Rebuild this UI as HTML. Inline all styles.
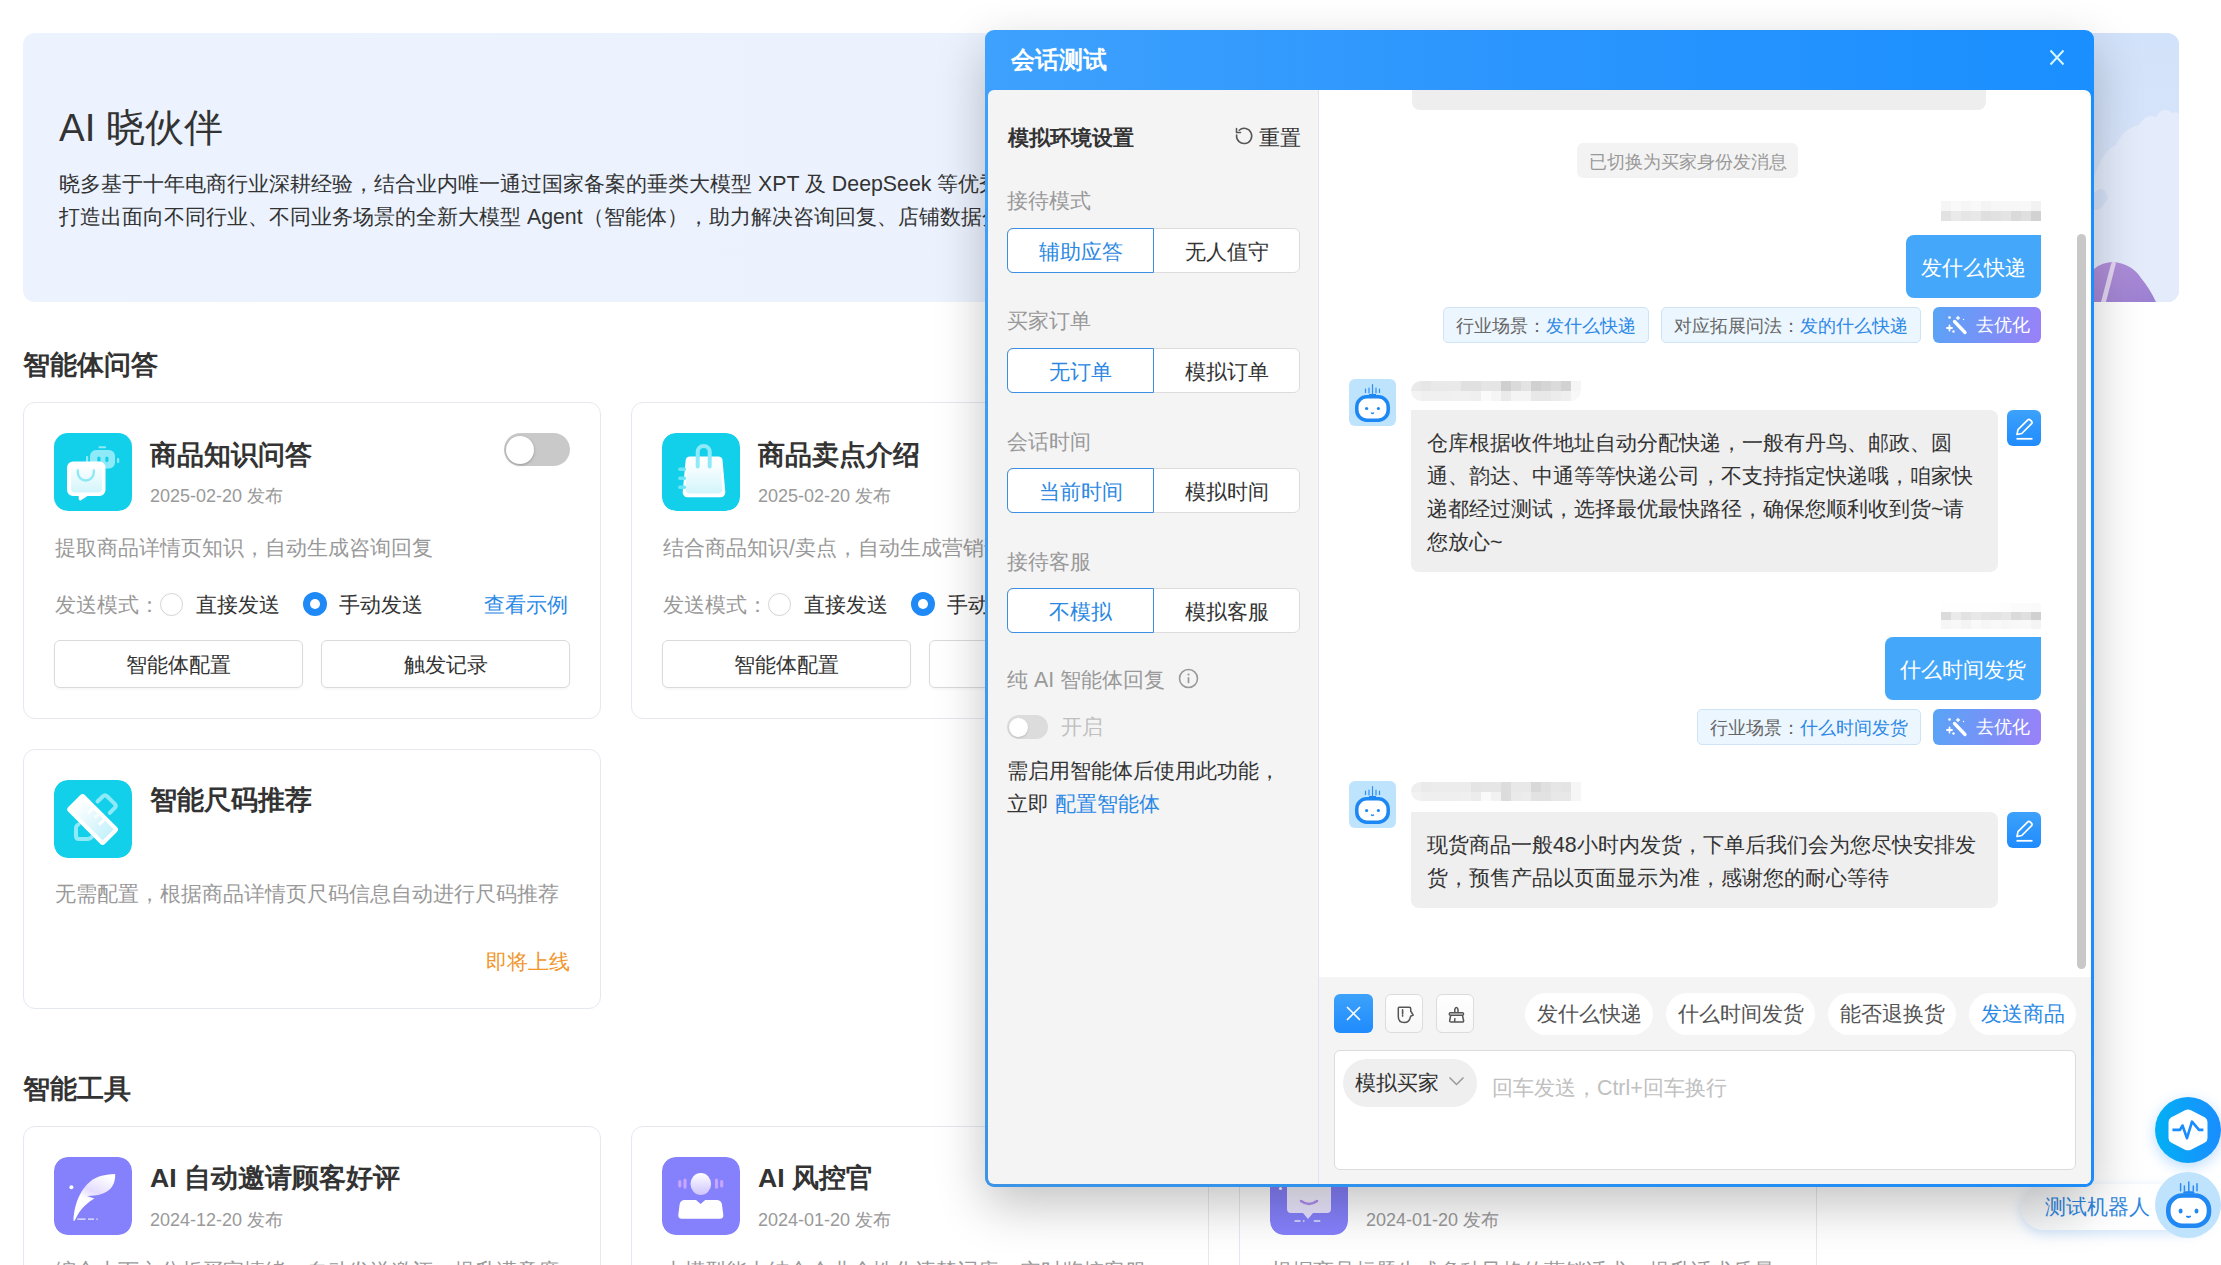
<!DOCTYPE html>
<html><head><meta charset="utf-8">
<style>
*{box-sizing:border-box;margin:0;padding:0}
html,body{width:2221px;height:1265px;overflow:hidden;background:#fff}
body{position:relative;font-family:"Liberation Sans",sans-serif;color:#333}
.abs{position:absolute}
.banner{left:23px;top:33px;width:2156px;height:269px;border-radius:12px;background:linear-gradient(90deg,#ecf3fe 0%,#ebf2fe 60%,#d6e5fb 100%);overflow:hidden}
.t{position:absolute;white-space:nowrap}
.card{position:absolute;border:1px solid #e6e8f1;border-radius:12px;background:#fff;width:578px}
.icon{position:absolute;left:30px;top:30px;width:78px;height:78px;border-radius:14px}
.cyan{background:#13d0ea}
.purple{background:#8580fb}
.ctitle{position:absolute;left:126px;font-size:26.667px;line-height:40px;font-weight:bold;color:#333;white-space:nowrap}
.cdate{position:absolute;left:126px;font-size:18px;line-height:30px;color:#999;white-space:nowrap}
.cdesc{position:absolute;left:30px;font-size:21.333px;line-height:33px;color:#999;white-space:nowrap}
.sec{position:absolute;left:23px;font-size:26.667px;line-height:40px;font-weight:bold;color:#333}

.radio{position:absolute;width:23px;height:23px;border-radius:50%;border:1px solid #d4d4d4;background:#fff}
.radio.on{width:24px;height:24px;border:none;background:#1f89f6}
.radio.on:after{content:"";position:absolute;left:7px;top:7px;width:10px;height:10px;border-radius:50%;background:#fff}
.rtxt{position:absolute;font-size:21.333px;line-height:33px;color:#333;white-space:nowrap}
.btn{position:absolute;top:237px;width:249px;height:48px;border:1px solid #dadada;border-radius:6px;background:#fff;box-shadow:0 2px 2px rgba(0,0,0,0.03);text-align:center;font-size:21.333px;line-height:44px;padding-top:2px;color:#333}
.tog{position:absolute;left:480px;top:30px;width:66px;height:33px;border-radius:17px;background:#c9c9c9}
.tog:after{content:"";position:absolute;left:2px;top:2.5px;width:28px;height:28px;border-radius:50%;background:#fff;box-shadow:0 1px 3px rgba(0,0,0,0.25)}

.modal{position:absolute;left:985px;top:30px;width:1109px;height:1157px;border-radius:9px;background:linear-gradient(180deg,rgba(0,0,0,0) 60px,rgba(0,0,0,0) 60px),linear-gradient(90deg,#3ea1fd 0%,#2a95fe 50%,#1a8fff 100%);box-shadow:0 18px 50px rgba(0,0,0,0.24);z-index:10}
.m{position:absolute;left:0;top:0;width:2221px;height:1265px;z-index:11}
.m .t{position:absolute;white-space:nowrap}
.lp{position:absolute;left:988px;top:90px;width:331px;height:1094px;background:#f4f4f5;border-radius:6px 0 0 6px;border-right:1px solid #dde5ee}
.chat{position:absolute;left:1319px;top:90px;width:772px;height:1094px;background:#fff;border-radius:0 7px 6px 0;overflow:hidden}
.lbl{position:absolute;left:1007px;font-size:21.333px;line-height:33px;color:#999;white-space:nowrap}
.seg{position:absolute;left:1007px;width:293px;height:45px;border:1px solid #dcdcdc;border-radius:6px;background:#fff}
.seg .a,.seg .b{position:absolute;top:-1px;height:45px;font-size:21.333px;line-height:45px;padding-top:2px;text-align:center}
.seg .a{left:-1px;width:147px;border:1px solid #3d8fe3;border-radius:6px 0 0 6px;color:#2b88e2;line-height:43px}
.seg .b{left:146px;width:146px;color:#333}
.bub{position:absolute;font-size:21.333px;line-height:33px;white-space:nowrap}
.ubub{background:#45a7fa;color:#fff;border-radius:8px 0 8px 8px;padding:17px 15px 13px;height:63px}
.gbub{background:#efefef;color:#333;border-radius:0 8px 8px 8px;padding:17px 14px 13px 16px;width:587px}
.tag{position:absolute;height:36px;border:1px solid #cfe3f7;background:#ecf6ff;border-radius:5px;font-size:18px;line-height:34px;padding:1px 0 0 12px;color:#666;white-space:nowrap}
.tag b{font-weight:normal;color:#2d88e6}
.opt{position:absolute;left:1933px;width:108px;height:36px;border-radius:6px;background:linear-gradient(105deg,#58a4f6 0%,#7d8ff7 60%,#9b80f8 100%);color:#fff;font-size:18px;line-height:36px;white-space:nowrap}
.av{position:absolute;left:1349px;width:47px;height:47px;border-radius:6px;background:#bee3fd}
.edit{position:absolute;left:2007px;width:34px;height:36px;border-radius:6px;background:linear-gradient(180deg,#3da2fb,#1f8bfd)}
.blur{position:absolute;height:20px}
.pill{position:absolute;top:993px;height:42px;border-radius:21px;background:#fff;font-size:21px;line-height:42px;color:#555;text-align:center;white-space:nowrap}
.tb{position:absolute;top:994px;width:38px;height:39px;border-radius:6px;border:1px solid #dcdcdc;background:linear-gradient(180deg,#fff,#f7f7f7)}
</style></head><body>

<!-- banner -->
<div class="abs banner"></div>
<div class="abs" style="left:2094px;top:33px;width:85px;height:269px;overflow:hidden;border-radius:0 12px 12px 0">
<svg width="85" height="269" viewBox="0 0 85 269"><defs><linearGradient id="bk" x1="0" y1="0" x2="0" y2="1"><stop offset="0" stop-color="#d2e2fa"/><stop offset="1" stop-color="#dde7fb"/></linearGradient>
<linearGradient id="pl" x1="0" y1="0" x2="1" y2="1"><stop offset="0" stop-color="#b592dc"/><stop offset="1" stop-color="#9a7fd0"/></linearGradient></defs>
<rect width="85" height="269" fill="url(#bk)"/>
<path d="M0 145 Q8 118 22 112 Q30 95 45 92 Q52 80 62 84 Q70 72 78 80 Q84 78 85 82 V269 H0z" fill="#e4ecfc"/>
<path d="M0 160 Q10 150 14 165 Q6 180 0 176z" fill="#d6e3fa"/>
<path d="M0 269 V236 Q8 229 20 229 Q38 231 47 245 Q56 256 62 269z" fill="url(#pl)"/>
<path d="M7 269 L17 231 Q19 227 22 230 L12 269z" fill="#eadff5" opacity="0.9"/>
</svg></div>
<div class="t" style="left:59px;top:103px;font-size:38.5px;line-height:50px;color:#333">AI 晓伙伴</div>
<div class="t" style="left:59px;top:168px;font-size:21.333px;line-height:33px;color:#333">晓多基于十年电商行业深耕经验，结合业内唯一通过国家备案的垂类大模型 XPT 及 DeepSeek 等优秀大模型，<br>打造出面向不同行业、不同业务场景的全新大模型 Agent（智能体），助力解决咨询回复、店铺数据分析等问题</div>

<div class="sec" style="top:345px">智能体问答</div>

<!-- card 1 -->
<div class="card" style="left:23px;top:402px;height:317px">
<svg class="icon" viewBox="0 0 78 78" style="border-radius:0"><defs><linearGradient id="gw" x1="0" y1="0" x2="0" y2="1"><stop offset="0" stop-color="#fff"/><stop offset="1" stop-color="#d2f5fb"/></linearGradient></defs>
<rect width="78" height="78" rx="14" fill="#13d0ea"/>
<rect x="36" y="17" width="25" height="18.5" rx="6" fill="#8eeaf8"/>
<rect x="44.5" y="13.2" width="7.6" height="2" rx="1" fill="#8eeaf8"/>
<rect x="32" y="23" width="2.2" height="6.5" rx="1" fill="#8eeaf8"/>
<rect x="63" y="25" width="2.2" height="5" rx="1" fill="#8eeaf8"/>
<rect x="43.3" y="23.6" width="3.2" height="5.6" rx="1.6" fill="#13d0ea"/>
<rect x="51.3" y="23.6" width="3.2" height="5.6" rx="1.6" fill="#13d0ea"/>
<path d="M19 28.5h26.5a6 6 0 0 1 6 6v22.5a6 6 0 0 1-6 6h-12l-6.5 4.2a1.5 1.5 0 0 1-2.3-1.2v-3h-5.7a6 6 0 0 1-6-6v-22.5a6 6 0 0 1 6-6z" fill="#fff"/>
<path d="M21 32.5h23a4 4 0 0 1 4 4v19a4 4 0 0 1-4 4h-23a4 4 0 0 1-4-4v-19a4 4 0 0 1 4-4z" fill="url(#gw)"/>
<path d="M23.8 37.5v2a8 8 0 0 0 16 0v-2" stroke="#8ee8f5" stroke-width="2.4" fill="none" stroke-linecap="round"/>
</svg>
  <div class="tog"></div>
  <div class="ctitle" style="top:32px">商品知识问答</div>
  <div class="cdate" style="top:78px">2025-02-20 发布</div>
  <div class="cdesc" style="top:129px;left:31px">提取商品详情页知识，自动生成咨询回复</div>
  <div class="rtxt" style="left:31px;top:186px;color:#999">发送模式：</div>
  <div class="radio" style="left:135.5px;top:189.5px"></div>
  <div class="rtxt" style="left:172px;top:186px">直接发送</div>
  <div class="radio on" style="left:279px;top:189px"></div>
  <div class="rtxt" style="left:315px;top:186px">手动发送</div>
  <div class="rtxt" style="left:460px;top:186px;color:#2b89e6">查看示例</div>
  <div class="btn" style="left:30px">智能体配置</div>
  <div class="btn" style="left:297px">触发记录</div>
</div>

<!-- card 2 -->
<div class="card" style="left:631px;top:402px;height:317px">
<svg class="icon" viewBox="0 0 78 78"><rect width="78" height="78" rx="14" fill="#13d0ea"/>
<path d="M28.2 23.6h27.8a4.6 4.6 0 0 1 4.6 4.2l2.7 31.3a4.8 4.8 0 0 1-4.8 5.2h-33a4.8 4.8 0 0 1-4.8-5.2l2.9-31.3a4.6 4.6 0 0 1 4.6-4.2z" fill="#fff"/>
<path d="M29.5 28h25a4 4 0 0 1 4 3.7l2 24.5a4 4 0 0 1-4 4.3h-29a4 4 0 0 1-4-4.3l2-24.5a4 4 0 0 1 4-3.7z" fill="url(#gw)"/>
<path d="M35.7 33.5V19a6 6 0 0 1 12 0v14.5" stroke="#8eeaf8" stroke-width="4" stroke-linecap="round" fill="none"/>
<path d="M17.8 36.2h4.6M17.8 45.2h4.6M17.8 54.2h4.6" stroke="#6ae4f6" stroke-width="3.5" stroke-linecap="round"/>
</svg>
  <div class="ctitle" style="top:32px">商品卖点介绍</div>
  <div class="cdate" style="top:78px">2025-02-20 发布</div>
  <div class="cdesc" style="top:129px;left:31px">结合商品知识/卖点，自动生成营销话术</div>
  <div class="rtxt" style="left:31px;top:186px;color:#999">发送模式：</div>
  <div class="radio" style="left:135.5px;top:189.5px"></div>
  <div class="rtxt" style="left:172px;top:186px">直接发送</div>
  <div class="radio on" style="left:279px;top:189px"></div>
  <div class="rtxt" style="left:315px;top:186px">手动发送</div>
  <div class="btn" style="left:30px">智能体配置</div>
  <div class="btn" style="left:297px">触发记录</div>
</div>

<!-- card 4 -->
<div class="card" style="left:23px;top:749px;height:260px">
<svg class="icon" viewBox="0 0 78 78"><rect width="78" height="78" rx="14" fill="#13d0ea"/>
<path d="M43.5 21.5l5.5-5.2q2-1.8 4 0l7.8 7.6q1.8 2 0 4l-5 5" stroke="#8eeaf8" stroke-width="4" fill="none" stroke-linecap="round" stroke-linejoin="round"/>
<path d="M24.5 44.5q-2.5 1-2.5 4v7.5q0 3 3 3h9q2.2 0 3.8-1.8" stroke="#8eeaf8" stroke-width="4" fill="none" stroke-linecap="round" stroke-linejoin="round"/>
<defs><linearGradient id="gr" x1="0" y1="0" x2="1" y2="0"><stop offset="0" stop-color="#fff"/><stop offset="1" stop-color="#c6f1fb"/></linearGradient></defs>
<g transform="rotate(45 38.6 39.4)"><rect x="12.6" y="27.6" width="52" height="23.6" rx="3.5" fill="#fff"/>
<rect x="16.6" y="31.6" width="44" height="15.6" rx="1.2" fill="url(#gr)"/>
<path d="M31 31.6v7M39 31.6v5M47 31.6v7" stroke="#fff" stroke-width="2.8"/></g>
</svg>
  <div class="ctitle" style="top:30px">智能尺码推荐</div>
  <div class="cdesc" style="top:128px;left:31px">无需配置，根据商品详情页尺码信息自动进行尺码推荐</div>
  <div class="rtxt" style="left:462px;top:196px;color:#f0962c">即将上线</div>
</div>

<div class="sec" style="top:1069px">智能工具</div>

<!-- tool cards -->
<div class="card" style="left:23px;top:1126px;height:300px">
  <svg class="icon" viewBox="0 0 78 78"><defs><linearGradient id="gp" x1="0.7" y1="0" x2="0.3" y2="1"><stop offset="0" stop-color="#fff"/><stop offset="0.4" stop-color="#e4dcff"/><stop offset="0.6" stop-color="#fff"/><stop offset="1" stop-color="#fff"/></linearGradient></defs>
<rect width="78" height="78" rx="14" fill="#8580fb"/>
<circle cx="17.4" cy="30.2" r="2" fill="#fff"/>
<path d="M19.5 63.5C20 48 27 26 45 19.5C50 17.8 56 17.2 61.2 17C61.5 26 58 33 49 36.5C46 37.8 43 38.4 40 38.6L33 39L40.5 41.5C34 45 26 52 21.5 62C21 63.8 19.5 64.5 19.5 63.5Z" fill="url(#gp)"/>
<path d="M23.3 62.2h8.3M34 62.2h6M42.3 62.2h1.4" stroke="#fff" stroke-width="1.3" opacity="0.85"/>
</svg>
  <div class="ctitle" style="top:31px">AI 自动邀请顾客好评</div>
  <div class="cdate" style="top:78px">2024-12-20 发布</div>
  <div class="cdesc" style="top:128px;left:31px">综合上下文分析买家情绪，自动发送邀评，提升满意度</div>
</div>
<div class="card" style="left:631px;top:1126px;height:300px">
  <svg class="icon" viewBox="0 0 78 78"><defs><linearGradient id="gh" x1="0" y1="0" x2="0" y2="1"><stop offset="0" stop-color="#fff"/><stop offset="1" stop-color="#cdc4ff"/></linearGradient></defs>
<rect width="78" height="78" rx="14" fill="#8580fb"/>
<ellipse cx="38.8" cy="27" rx="10.3" ry="11" fill="url(#gh)"/>
<path d="M22.5 43h11.5l4.6 4 4.6-4h11.5q4.5 0 5.3 4.5l1.3 10.5q0.3 3.8-3.5 3.8h-38q-3.8 0-3.5-3.8l1.3-10.5q0.8-4.5 5-4.5z" fill="#fff"/>
<path d="M17.8 24.5v4.5M23 23.2v7M54.5 23.2v7M59.7 24.5v4.5" stroke="#c6a6ff" stroke-width="3.2" stroke-linecap="round"/>
</svg>
  <div class="ctitle" style="top:31px">AI 风控官</div>
  <div class="cdate" style="top:78px">2024-01-20 发布</div>
  <div class="cdesc" style="top:128px;left:31px">大模型能力结合企业个性化违禁词库，实时监控客服</div>
</div>
<div class="card" style="left:1239px;top:1126px;height:300px">
  <svg class="icon" viewBox="0 0 78 78"><defs><linearGradient id="gc" x1="0" y1="0" x2="0" y2="1"><stop offset="0" stop-color="#fff"/><stop offset="1" stop-color="#e6e0ff"/></linearGradient></defs>
<rect width="78" height="78" rx="14" fill="#8580fb"/>
<circle cx="10.5" cy="31.5" r="1.6" fill="#fff"/>
<path d="M21 14h36a4 4 0 0 1 4 4v34a4 4 0 0 1-4 4h-14l-5 6-5-6h-12a4 4 0 0 1-4-4v-34a4 4 0 0 1 4-4z" fill="url(#gc)"/>
<path d="M31 44q8 6 16 0" stroke="#b08ef0" stroke-width="2.5" fill="none" stroke-linecap="round"/>
<path d="M24.5 64h6M33 64h1.5M43.8 64h6.5" stroke="#fff" stroke-width="1.3" opacity="0.8"/>
</svg>
  <div class="ctitle" style="top:31px;height:29px;overflow:hidden">AI 营销话术</div>
  <div class="cdate" style="top:78px">2024-01-20 发布</div>
  <div class="cdesc" style="top:128px;left:31px">根据商品标题生成多种风格的营销话术，提升话术质量</div>
</div>



<div style="position:absolute;left:2021px;top:1184px;width:190px;height:46px;border-radius:23px;background:linear-gradient(90deg,#f3f4f6,#fff 40%);box-shadow:0 4px 12px rgba(40,130,240,0.22);z-index:5"></div>
<div style="position:absolute;left:2045px;top:1191px;font-size:21.333px;line-height:33px;color:#2e86de;white-space:nowrap;z-index:6">测试机器人</div>
<div style="position:absolute;left:2155px;top:1097px;width:66px;height:66px;border-radius:50%;background:linear-gradient(90deg,#02b0f4,#1a8dff);box-shadow:0 4px 14px rgba(30,140,255,0.3);z-index:12">
<svg width="66" height="66" viewBox="0 0 66 66"><path d="M33 12.5 Q34.5 12.5 36 13.3 L50 20.5 Q52.5 22 52.5 25 V41 Q52.5 44 50 45.5 L36 52.7 Q33 54 30 52.7 L16 45.5 Q13.5 44 13.5 41 V25 Q13.5 22 16 20.5 L30 13.3 Q31.5 12.5 33 12.5z" fill="#fff"/>
<path d="M17.4 32.9H25L27.5 28.5L32 41.2L37 24.7L44 32.9H48.4" stroke="#1a8cff" stroke-width="2.6" fill="none" stroke-linejoin="round"/></svg></div>
<div style="position:absolute;left:2155px;top:1172px;width:66px;height:66px;border-radius:50%;background:#bfe3fd;z-index:12">
<svg width="66" height="66" viewBox="0 0 66 66"><path d="M33.8 10v10M25.6 11.7v7M42 11.7v7M29.4 14v4.5M38.3 14v4.5" stroke="#2b8cf3" stroke-width="1.5" stroke-linecap="round"/><path d="M29.5 20.5h8.6" stroke="#1f88f3" stroke-width="2.6" stroke-linecap="round"/>
<rect x="13.3" y="23.5" width="40.7" height="30.2" rx="14" fill="#fff" stroke="#1f88f3" stroke-width="4.6"/><ellipse cx="25.6" cy="39" rx="2" ry="2.5" fill="#1f88f3"/><ellipse cx="41.5" cy="39" rx="2" ry="2.5" fill="#1f88f3"/><path d="M32 44.5q1.5 1 3 0" stroke="#1f88f3" stroke-width="2" stroke-linecap="round"/></svg></div>
<div class="modal"></div>
<div class="m">
  <div style="position:absolute;left:985px;top:90px;width:1109px;height:1097px;border-radius:0 0 9px 9px;background:linear-gradient(90deg,#3d94e6,#2790f2 50%,#1e8cf8);-webkit-mask-image:linear-gradient(180deg,transparent 0%,#000 100%);mask-image:linear-gradient(180deg,transparent 0%,#000 100%)"></div>
  <div class="t" style="left:1011px;top:45px;font-size:24px;line-height:30px;font-weight:bold;color:#fff">会话测试</div>
  <svg style="position:absolute;left:2049px;top:49px" width="16" height="17" viewBox="0 0 16 17"><path d="M1.5 1.5l13 14M14.5 1.5l-13 14" stroke="#d6f6ff" stroke-width="2"/></svg>

  <div class="lp"></div>
  <div class="t" style="left:1008px;top:122px;font-size:21.333px;line-height:33px;font-weight:bold;color:#333">模拟环境设置</div>
  <svg style="position:absolute;left:1234px;top:126px" width="20" height="20" viewBox="0 0 20 20"><path d="M5.2 4.2A7.6 7.6 0 1 1 2.6 9" stroke="#555" stroke-width="1.5" fill="none" stroke-linecap="round"/><path d="M2.5 2.5v4h4" stroke="#555" stroke-width="1.5" fill="none" stroke-linecap="round" stroke-linejoin="round"/></svg>
  <div class="t" style="left:1259px;top:122px;font-size:21.333px;line-height:33px;color:#333">重置</div>

  <div class="lbl" style="top:185px">接待模式</div>
  <div class="seg" style="top:228px"><div class="a">辅助应答</div><div class="b">无人值守</div></div>
  <div class="lbl" style="top:305px">买家订单</div>
  <div class="seg" style="top:348px"><div class="a">无订单</div><div class="b">模拟订单</div></div>
  <div class="lbl" style="top:426px">会话时间</div>
  <div class="seg" style="top:468px"><div class="a">当前时间</div><div class="b">模拟时间</div></div>
  <div class="lbl" style="top:546px">接待客服</div>
  <div class="seg" style="top:588px"><div class="a">不模拟</div><div class="b">模拟客服</div></div>
  <div class="lbl" style="top:664px">纯 AI 智能体回复</div>
  <svg style="position:absolute;left:1178px;top:668px" width="21" height="21" viewBox="0 0 21 21"><circle cx="10.5" cy="10.5" r="9" stroke="#999" stroke-width="1.6" fill="none"/><circle cx="10.5" cy="6.5" r="1.1" fill="#999"/><path d="M10.5 9.2v6" stroke="#999" stroke-width="1.7"/></svg>
  <div style="position:absolute;left:1007px;top:715px;width:41px;height:24px;border-radius:12px;background:#dcdcdc"><div style="position:absolute;left:2px;top:2.5px;width:19px;height:19px;border-radius:50%;background:#fff;box-shadow:0 1px 2px rgba(0,0,0,0.15)"></div></div>
  <div class="t" style="left:1061px;top:711px;font-size:21.333px;line-height:33px;color:#c0c0c0">开启</div>
  <div class="t" style="left:1007px;top:755px;font-size:21.333px;line-height:33px;color:#333">需启用智能体后使用此功能，<br>立即 <span style="color:#2b89e6">配置智能体</span></div>

  <div class="chat"></div>
  <div style="position:absolute;left:1412px;top:90px;width:574px;height:20px;background:#eeeeee;border-radius:0 0 8px 8px"></div>
  <div style="position:absolute;left:1577px;top:143px;width:221px;height:35px;border-radius:6px;background:#f3f3f3;font-size:18px;line-height:35px;padding-top:2px;color:#999;text-align:center">已切换为买家身份发消息</div>

  <div class="blur" style="left:1941px;top:201px;width:100px;height:20px;overflow:hidden;"><i style="position:absolute;left:0px;top:0px;width:10px;height:10px;background:rgb(245,245,245)"></i><i style="position:absolute;left:10px;top:0px;width:10px;height:10px;background:rgb(249,249,249)"></i><i style="position:absolute;left:20px;top:0px;width:10px;height:10px;background:rgb(246,246,246)"></i><i style="position:absolute;left:30px;top:0px;width:10px;height:10px;background:rgb(249,249,249)"></i><i style="position:absolute;left:40px;top:0px;width:10px;height:10px;background:rgb(244,244,244)"></i><i style="position:absolute;left:50px;top:0px;width:10px;height:10px;background:rgb(247,247,247)"></i><i style="position:absolute;left:60px;top:0px;width:10px;height:10px;background:rgb(247,247,247)"></i><i style="position:absolute;left:70px;top:0px;width:10px;height:10px;background:rgb(247,247,247)"></i><i style="position:absolute;left:80px;top:0px;width:10px;height:10px;background:rgb(248,248,248)"></i><i style="position:absolute;left:90px;top:0px;width:10px;height:10px;background:rgb(242,242,242)"></i><i style="position:absolute;left:0px;top:10px;width:10px;height:10px;background:rgb(226,226,226)"></i><i style="position:absolute;left:10px;top:10px;width:10px;height:10px;background:rgb(234,234,234)"></i><i style="position:absolute;left:20px;top:10px;width:10px;height:10px;background:rgb(229,229,229)"></i><i style="position:absolute;left:30px;top:10px;width:10px;height:10px;background:rgb(232,232,232)"></i><i style="position:absolute;left:40px;top:10px;width:10px;height:10px;background:rgb(223,223,223)"></i><i style="position:absolute;left:50px;top:10px;width:10px;height:10px;background:rgb(225,225,225)"></i><i style="position:absolute;left:60px;top:10px;width:10px;height:10px;background:rgb(228,228,228)"></i><i style="position:absolute;left:70px;top:10px;width:10px;height:10px;background:rgb(218,218,218)"></i><i style="position:absolute;left:80px;top:10px;width:10px;height:10px;background:rgb(223,223,223)"></i><i style="position:absolute;left:90px;top:10px;width:10px;height:10px;background:rgb(210,210,210)"></i></div>
  <div class="bub ubub" style="left:1906px;top:235px">发什么快递</div>
  <div class="tag" style="left:1443px;top:307px;width:206px">行业场景：<b>发什么快递</b></div>
  <div class="tag" style="left:1661px;top:307px;width:260px">对应拓展问法：<b>发的什么快递</b></div>
  <div class="opt" style="top:307px"><svg width="22" height="20" viewBox="0 0 22 20" style="position:absolute;left:13px;top:8px"><path d="M8.5 6.5l10.5 11" stroke="#fff" stroke-width="3.3" stroke-linecap="round"/><path d="M3.5 10.5v5M1 13h5" stroke="#fff" stroke-width="1.8" stroke-linecap="round"/><circle cx="3.5" cy="2.5" r="1.3" fill="#fff"/><path d="M12 1.5v3M10.5 3h3" stroke="#fff" stroke-width="1.3" stroke-linecap="round"/><circle cx="7.5" cy="16.5" r="1.2" fill="#fff"/><circle cx="17.5" cy="4.5" r="0.7" fill="#fff"/></svg><span style="position:absolute;left:43px;top:0">去优化</span></div>

  <div class="av" style="top:379px"><svg width="47" height="47" viewBox="0 0 47 47"><path d="M23.5 5.5v10M20 9v5M27 9v5M16.5 10v3.5M30.5 10v3.5" stroke="#2f8ff5" stroke-width="1.2" stroke-linecap="round"/><path d="M20 16h7" stroke="#1d87f3" stroke-width="2"/><rect x="7.8" y="17.8" width="31.4" height="23.4" rx="10" fill="#fff" stroke="#1d87f3" stroke-width="3.5"/><circle cx="17.6" cy="29.5" r="1.6" fill="#1d87f3"/><circle cx="29.4" cy="29.5" r="1.6" fill="#1d87f3"/><path d="M22.5 34q1 0.8 2 0" stroke="#1d87f3" stroke-width="1.5" stroke-linecap="round"/></svg></div>
  <div class="blur" style="left:1411px;top:381px;width:170px;height:20px;overflow:hidden;border-radius:10px 0 10px 10px"><i style="position:absolute;left:0px;top:0px;width:10px;height:10px;background:rgb(233,233,233)"></i><i style="position:absolute;left:10px;top:0px;width:10px;height:10px;background:rgb(230,230,230)"></i><i style="position:absolute;left:20px;top:0px;width:10px;height:10px;background:rgb(233,233,233)"></i><i style="position:absolute;left:30px;top:0px;width:10px;height:10px;background:rgb(233,233,233)"></i><i style="position:absolute;left:40px;top:0px;width:10px;height:10px;background:rgb(233,233,233)"></i><i style="position:absolute;left:50px;top:0px;width:10px;height:10px;background:rgb(224,224,224)"></i><i style="position:absolute;left:60px;top:0px;width:10px;height:10px;background:rgb(224,224,224)"></i><i style="position:absolute;left:70px;top:0px;width:10px;height:10px;background:rgb(229,229,229)"></i><i style="position:absolute;left:80px;top:0px;width:10px;height:10px;background:rgb(229,229,229)"></i><i style="position:absolute;left:90px;top:0px;width:10px;height:10px;background:rgb(207,207,207)"></i><i style="position:absolute;left:100px;top:0px;width:10px;height:10px;background:rgb(218,218,218)"></i><i style="position:absolute;left:110px;top:0px;width:10px;height:10px;background:rgb(227,227,227)"></i><i style="position:absolute;left:120px;top:0px;width:10px;height:10px;background:rgb(208,208,208)"></i><i style="position:absolute;left:130px;top:0px;width:10px;height:10px;background:rgb(213,213,213)"></i><i style="position:absolute;left:140px;top:0px;width:10px;height:10px;background:rgb(219,219,219)"></i><i style="position:absolute;left:150px;top:0px;width:10px;height:10px;background:rgb(210,210,210)"></i><i style="position:absolute;left:160px;top:0px;width:10px;height:10px;background:rgb(245,245,245)"></i><i style="position:absolute;left:0px;top:10px;width:10px;height:10px;background:rgb(243,243,243)"></i><i style="position:absolute;left:10px;top:10px;width:10px;height:10px;background:rgb(240,240,240)"></i><i style="position:absolute;left:20px;top:10px;width:10px;height:10px;background:rgb(240,240,240)"></i><i style="position:absolute;left:30px;top:10px;width:10px;height:10px;background:rgb(240,240,240)"></i><i style="position:absolute;left:40px;top:10px;width:10px;height:10px;background:rgb(241,241,241)"></i><i style="position:absolute;left:50px;top:10px;width:10px;height:10px;background:rgb(241,241,241)"></i><i style="position:absolute;left:60px;top:10px;width:10px;height:10px;background:rgb(239,239,239)"></i><i style="position:absolute;left:70px;top:10px;width:10px;height:10px;background:rgb(250,250,250)"></i><i style="position:absolute;left:80px;top:10px;width:10px;height:10px;background:rgb(245,245,245)"></i><i style="position:absolute;left:90px;top:10px;width:10px;height:10px;background:rgb(234,234,234)"></i><i style="position:absolute;left:100px;top:10px;width:10px;height:10px;background:rgb(244,244,244)"></i><i style="position:absolute;left:110px;top:10px;width:10px;height:10px;background:rgb(244,244,244)"></i><i style="position:absolute;left:120px;top:10px;width:10px;height:10px;background:rgb(232,232,232)"></i><i style="position:absolute;left:130px;top:10px;width:10px;height:10px;background:rgb(232,232,232)"></i><i style="position:absolute;left:140px;top:10px;width:10px;height:10px;background:rgb(236,236,236)"></i><i style="position:absolute;left:150px;top:10px;width:10px;height:10px;background:rgb(239,239,239)"></i><i style="position:absolute;left:160px;top:10px;width:10px;height:10px;background:rgb(248,248,248)"></i></div>
  <div class="bub gbub" style="left:1411px;top:410px">仓库根据收件地址自动分配快递，一般有丹鸟、邮政、圆<br>通、韵达、中通等等快递公司，不支持指定快递哦，咱家快<br>递都经过测试，选择最优最快路径，确保您顺利收到货~请<br>您放心~</div>
  <div class="edit" style="top:410px"><svg width="34" height="36" viewBox="0 0 34 36"><path d="M10 24.5l1-4.8 9.8-9.8a1.6 1.6 0 0 1 2.3 0l1.5 1.5a1.6 1.6 0 0 1 0 2.3l-9.8 9.8z" stroke="#fff" stroke-width="1.7" fill="none" stroke-linejoin="round"/><path d="M9.5 28.8h16" stroke="#fff" stroke-width="1.8"/></svg></div>

  <div class="blur" style="left:1941px;top:603px;width:100px;height:26.099999999999998px;overflow:hidden;"><i style="position:absolute;left:0px;top:0.0px;width:10px;height:8.7px;background:rgb(254,254,254)"></i><i style="position:absolute;left:10px;top:0.0px;width:10px;height:8.7px;background:rgb(254,254,254)"></i><i style="position:absolute;left:20px;top:0.0px;width:10px;height:8.7px;background:rgb(254,254,254)"></i><i style="position:absolute;left:30px;top:0.0px;width:10px;height:8.7px;background:rgb(254,254,254)"></i><i style="position:absolute;left:40px;top:0.0px;width:10px;height:8.7px;background:rgb(254,254,254)"></i><i style="position:absolute;left:50px;top:0.0px;width:10px;height:8.7px;background:rgb(254,254,254)"></i><i style="position:absolute;left:60px;top:0.0px;width:10px;height:8.7px;background:rgb(253,253,253)"></i><i style="position:absolute;left:70px;top:0.0px;width:10px;height:8.7px;background:rgb(251,251,251)"></i><i style="position:absolute;left:80px;top:0.0px;width:10px;height:8.7px;background:rgb(251,251,251)"></i><i style="position:absolute;left:90px;top:0.0px;width:10px;height:8.7px;background:rgb(250,250,250)"></i><i style="position:absolute;left:0px;top:8.7px;width:10px;height:8.7px;background:rgb(219,219,219)"></i><i style="position:absolute;left:10px;top:8.7px;width:10px;height:8.7px;background:rgb(234,234,234)"></i><i style="position:absolute;left:20px;top:8.7px;width:10px;height:8.7px;background:rgb(226,226,226)"></i><i style="position:absolute;left:30px;top:8.7px;width:10px;height:8.7px;background:rgb(232,232,232)"></i><i style="position:absolute;left:40px;top:8.7px;width:10px;height:8.7px;background:rgb(228,228,228)"></i><i style="position:absolute;left:50px;top:8.7px;width:10px;height:8.7px;background:rgb(227,227,227)"></i><i style="position:absolute;left:60px;top:8.7px;width:10px;height:8.7px;background:rgb(231,231,231)"></i><i style="position:absolute;left:70px;top:8.7px;width:10px;height:8.7px;background:rgb(218,218,218)"></i><i style="position:absolute;left:80px;top:8.7px;width:10px;height:8.7px;background:rgb(223,223,223)"></i><i style="position:absolute;left:90px;top:8.7px;width:10px;height:8.7px;background:rgb(208,208,208)"></i><i style="position:absolute;left:0px;top:17.4px;width:10px;height:8.7px;background:rgb(246,246,246)"></i><i style="position:absolute;left:10px;top:17.4px;width:10px;height:8.7px;background:rgb(248,248,248)"></i><i style="position:absolute;left:20px;top:17.4px;width:10px;height:8.7px;background:rgb(244,244,244)"></i><i style="position:absolute;left:30px;top:17.4px;width:10px;height:8.7px;background:rgb(249,249,249)"></i><i style="position:absolute;left:40px;top:17.4px;width:10px;height:8.7px;background:rgb(246,246,246)"></i><i style="position:absolute;left:50px;top:17.4px;width:10px;height:8.7px;background:rgb(249,249,249)"></i><i style="position:absolute;left:60px;top:17.4px;width:10px;height:8.7px;background:rgb(247,247,247)"></i><i style="position:absolute;left:70px;top:17.4px;width:10px;height:8.7px;background:rgb(248,248,248)"></i><i style="position:absolute;left:80px;top:17.4px;width:10px;height:8.7px;background:rgb(249,249,249)"></i><i style="position:absolute;left:90px;top:17.4px;width:10px;height:8.7px;background:rgb(244,244,244)"></i></div>
  <div class="bub ubub" style="left:1885px;top:637px">什么时间发货</div>
  <div class="tag" style="left:1697px;top:709px;width:224px">行业场景：<b>什么时间发货</b></div>
  <div class="opt" style="top:709px"><svg width="22" height="20" viewBox="0 0 22 20" style="position:absolute;left:13px;top:8px"><path d="M8.5 6.5l10.5 11" stroke="#fff" stroke-width="3.3" stroke-linecap="round"/><path d="M3.5 10.5v5M1 13h5" stroke="#fff" stroke-width="1.8" stroke-linecap="round"/><circle cx="3.5" cy="2.5" r="1.3" fill="#fff"/><path d="M12 1.5v3M10.5 3h3" stroke="#fff" stroke-width="1.3" stroke-linecap="round"/><circle cx="7.5" cy="16.5" r="1.2" fill="#fff"/><circle cx="17.5" cy="4.5" r="0.7" fill="#fff"/></svg><span style="position:absolute;left:43px;top:0">去优化</span></div>

  <div class="av" style="top:781px"><svg width="47" height="47" viewBox="0 0 47 47"><path d="M23.5 5.5v10M20 9v5M27 9v5M16.5 10v3.5M30.5 10v3.5" stroke="#2f8ff5" stroke-width="1.2" stroke-linecap="round"/><path d="M20 16h7" stroke="#1d87f3" stroke-width="2"/><rect x="7.8" y="17.8" width="31.4" height="23.4" rx="10" fill="#fff" stroke="#1d87f3" stroke-width="3.5"/><circle cx="17.6" cy="29.5" r="1.6" fill="#1d87f3"/><circle cx="29.4" cy="29.5" r="1.6" fill="#1d87f3"/><path d="M22.5 34q1 0.8 2 0" stroke="#1d87f3" stroke-width="1.5" stroke-linecap="round"/></svg></div>
  <div class="blur" style="left:1411px;top:782px;width:170px;height:19.0px;overflow:hidden;border-radius:10px 0 0 10px"><i style="position:absolute;left:0px;top:0.0px;width:10px;height:9.5px;background:rgb(238,238,238)"></i><i style="position:absolute;left:10px;top:0.0px;width:10px;height:9.5px;background:rgb(234,234,234)"></i><i style="position:absolute;left:20px;top:0.0px;width:10px;height:9.5px;background:rgb(236,236,236)"></i><i style="position:absolute;left:30px;top:0.0px;width:10px;height:9.5px;background:rgb(236,236,236)"></i><i style="position:absolute;left:40px;top:0.0px;width:10px;height:9.5px;background:rgb(236,236,236)"></i><i style="position:absolute;left:50px;top:0.0px;width:10px;height:9.5px;background:rgb(236,236,236)"></i><i style="position:absolute;left:60px;top:0.0px;width:10px;height:9.5px;background:rgb(228,228,228)"></i><i style="position:absolute;left:70px;top:0.0px;width:10px;height:9.5px;background:rgb(230,230,230)"></i><i style="position:absolute;left:80px;top:0.0px;width:10px;height:9.5px;background:rgb(230,230,230)"></i><i style="position:absolute;left:90px;top:0.0px;width:10px;height:9.5px;background:rgb(220,220,220)"></i><i style="position:absolute;left:100px;top:0.0px;width:10px;height:9.5px;background:rgb(232,232,232)"></i><i style="position:absolute;left:110px;top:0.0px;width:10px;height:9.5px;background:rgb(232,232,232)"></i><i style="position:absolute;left:120px;top:0.0px;width:10px;height:9.5px;background:rgb(216,216,216)"></i><i style="position:absolute;left:130px;top:0.0px;width:10px;height:9.5px;background:rgb(224,224,224)"></i><i style="position:absolute;left:140px;top:0.0px;width:10px;height:9.5px;background:rgb(230,230,230)"></i><i style="position:absolute;left:150px;top:0.0px;width:10px;height:9.5px;background:rgb(228,228,228)"></i><i style="position:absolute;left:160px;top:0.0px;width:10px;height:9.5px;background:rgb(246,246,246)"></i><i style="position:absolute;left:0px;top:9.5px;width:10px;height:9.5px;background:rgb(242,242,242)"></i><i style="position:absolute;left:10px;top:9.5px;width:10px;height:9.5px;background:rgb(239,239,239)"></i><i style="position:absolute;left:20px;top:9.5px;width:10px;height:9.5px;background:rgb(239,239,239)"></i><i style="position:absolute;left:30px;top:9.5px;width:10px;height:9.5px;background:rgb(239,239,239)"></i><i style="position:absolute;left:40px;top:9.5px;width:10px;height:9.5px;background:rgb(239,239,239)"></i><i style="position:absolute;left:50px;top:9.5px;width:10px;height:9.5px;background:rgb(240,240,240)"></i><i style="position:absolute;left:60px;top:9.5px;width:10px;height:9.5px;background:rgb(236,236,236)"></i><i style="position:absolute;left:70px;top:9.5px;width:10px;height:9.5px;background:rgb(250,250,250)"></i><i style="position:absolute;left:80px;top:9.5px;width:10px;height:9.5px;background:rgb(242,242,242)"></i><i style="position:absolute;left:90px;top:9.5px;width:10px;height:9.5px;background:rgb(220,220,220)"></i><i style="position:absolute;left:100px;top:9.5px;width:10px;height:9.5px;background:rgb(234,234,234)"></i><i style="position:absolute;left:110px;top:9.5px;width:10px;height:9.5px;background:rgb(236,236,236)"></i><i style="position:absolute;left:120px;top:9.5px;width:10px;height:9.5px;background:rgb(226,226,226)"></i><i style="position:absolute;left:130px;top:9.5px;width:10px;height:9.5px;background:rgb(226,226,226)"></i><i style="position:absolute;left:140px;top:9.5px;width:10px;height:9.5px;background:rgb(232,232,232)"></i><i style="position:absolute;left:150px;top:9.5px;width:10px;height:9.5px;background:rgb(232,232,232)"></i><i style="position:absolute;left:160px;top:9.5px;width:10px;height:9.5px;background:rgb(246,246,246)"></i></div>
  <div class="bub gbub" style="left:1411px;top:812px">现货商品一般48小时内发货，下单后我们会为您尽快安排发<br>货，预售产品以页面显示为准，感谢您的耐心等待</div>
  <div class="edit" style="top:812px"><svg width="34" height="36" viewBox="0 0 34 36"><path d="M10 24.5l1-4.8 9.8-9.8a1.6 1.6 0 0 1 2.3 0l1.5 1.5a1.6 1.6 0 0 1 0 2.3l-9.8 9.8z" stroke="#fff" stroke-width="1.7" fill="none" stroke-linejoin="round"/><path d="M9.5 28.8h16" stroke="#fff" stroke-width="1.8"/></svg></div>

  <div style="position:absolute;left:2077px;top:234px;width:9px;height:735px;border-radius:4.5px;background:#c8c8c8"></div>

  <div style="position:absolute;left:1319px;top:977px;width:772px;height:207px;background:#f4f4f5;border-radius:0 0 6px 0"></div>
  <div style="position:absolute;left:1334px;top:994px;width:39px;height:39px;border-radius:6px;background:linear-gradient(180deg,#3da2fb,#1f8bfd)"><svg width="39" height="39" viewBox="0 0 39 39"><path d="M13 13l13 13M26 13l-13 13" stroke="#fff" stroke-width="1.6"/></svg></div>
  <div class="tb" style="left:1385px"><svg width="36" height="37" viewBox="0 0 36 37"><path d="M13.2 12.2H23.4Q24.7 12.2 24.7 13.6V16L27.2 20.1L24.6 21.3Q23.3 27.6 18.2 27.6Q12.3 27.6 12.3 21.6V13.2Q12.3 12.2 13.2 12.2Z" stroke="#555" stroke-width="1.5" fill="none" stroke-linejoin="round"/><path d="M16.6 14.9v4.2M16.6 20.5v0.6" stroke="#555" stroke-width="1.6" stroke-linecap="round"/></svg></div>
  <div class="tb" style="left:1436px"><svg width="36" height="37" viewBox="0 0 36 37"><path d="M17.8 17.6V14.2Q19.4 10.6 21 14.2V17.6" stroke="#555" stroke-width="1.5" fill="none"/><rect x="12.2" y="17.6" width="14.4" height="2.8" rx="1.3" fill="#bbb" stroke="#555" stroke-width="1.4"/><path d="M13.6 20.6L12.7 25.5Q12.5 27 14 27H25.2Q26.8 27 26.6 25.5L25.5 20.6M18 23.1L17.5 27" stroke="#555" stroke-width="1.5" fill="none" stroke-linejoin="round"/></svg></div>
  <div class="pill" style="left:1525px;width:128px">发什么快递</div>
  <div class="pill" style="left:1666px;width:149px">什么时间发货</div>
  <div class="pill" style="left:1828px;width:128px">能否退换货</div>
  <div class="pill" style="left:1969px;width:107px;color:#2b89e6">发送商品</div>

  <div style="position:absolute;left:1334px;top:1050px;width:742px;height:120px;border:1px solid #dcdcdc;border-radius:6px;background:#fff"></div>
  <div style="position:absolute;left:1343px;top:1059px;width:134px;height:48px;border-radius:24px;background:#efefef"></div>
  <div class="t" style="left:1355px;top:1067px;font-size:21.333px;line-height:33px;color:#333">模拟买家</div>
  <svg style="position:absolute;left:1448px;top:1076px" width="17" height="11" viewBox="0 0 17 11"><path d="M1.5 1.5l7 7 7-7" stroke="#999" stroke-width="1.5" fill="none"/></svg>
  <div class="t" style="left:1492px;top:1072px;font-size:21.333px;line-height:33px;color:#c0c0c0">回车发送，Ctrl+回车换行</div>
</div>
</body></html>
